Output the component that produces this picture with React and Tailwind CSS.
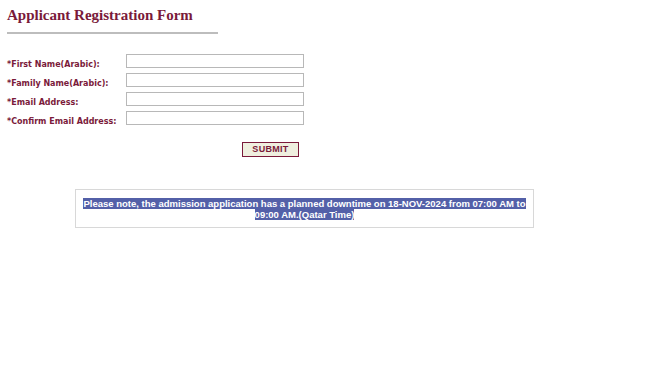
export default function App() {
  const fields = [
    "*First Name(Arabic):",
    "*Family Name(Arabic):",
    "*Email Address:",
    "*Confirm Email Address:",
  ];

  return (
    <div className="w-[650px] h-[367px] bg-white relative overflow-hidden">
      <div className="pl-[7px] pt-[6px]">
        <h1 className="text-[15px] leading-[18px] font-bold text-[#7a1a3a] font-['Liberation_Serif',serif]">
          Applicant Registration Form
        </h1>
        <div className="w-[211px] h-[2px] bg-[#bdbdbd] mt-[8px]" />
      </div>

      {/* Form rows */}
      <div className="pl-[7px] mt-[20px] flex flex-col gap-[5px]">
        {fields.map((label) => (
          <div key={label} className="flex items-start h-[14px]">
            <span className="w-[119px] pt-[6px] leading-[10px] text-[8px] font-bold text-[#7a1a3a] font-['DejaVu_Sans',sans-serif]">
              {label}
            </span>
            <input
              type="text"
              className="w-[178px] h-[14px] border border-[#b8b8b8] bg-white outline-none"
            />
          </div>
        ))}
      </div>

      <div className="flex pl-[242px] mt-[17px]">
        <button className="w-[57px] h-[15px] bg-[#efefdf] border-[1.5px] border-[#7a1a3a] text-[#7a1a3a] text-[9px] font-bold leading-none font-['Liberation_Sans',sans-serif] tracking-[0.3px]">
          SUBMIT
        </button>
      </div>

      <div className="ml-[75px] mt-[32px] w-[459px] h-[39px] border border-[#d8d8d8] flex items-center justify-center">
        <p className="text-center text-[9.5px] leading-[11px] font-bold text-white font-['Liberation_Sans',sans-serif] px-[6px]">
          <span className="bg-[#5360a8]">
            Please note, the admission application has a planned downtime on 18-NOV-2024 from 07:00 AM to 09:00 AM.(Qatar Time)
          </span>
        </p>
      </div>
    </div>
  );
}
